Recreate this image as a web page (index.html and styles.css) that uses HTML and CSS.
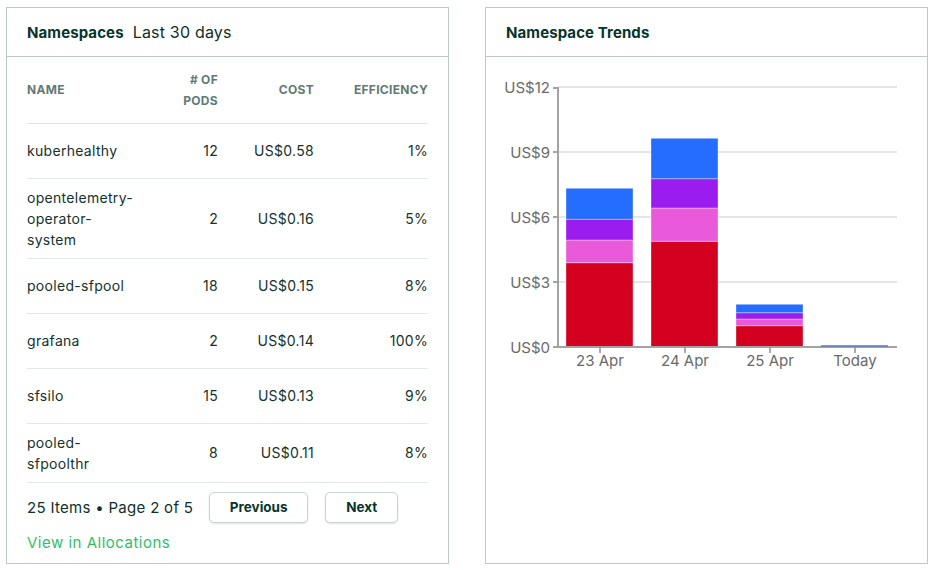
FILE: index.html
```html
<!DOCTYPE html>
<html>
<head>
<meta charset="utf-8">
<link rel="stylesheet" href="styles.css">
</head>
<body>
<div class="page">
  <section class="card">
    <header class="card-head">
      <span class="title">Namespaces</span>
      <span class="subtitle">Last 30 days</span>
    </header>
    <table class="ns-table">
      <colgroup>
        <col class="c-name"><col class="c-pods"><col class="c-cost"><col class="c-eff">
      </colgroup>
      <thead>
        <tr><th class="l">NAME</th><th># OF PODS</th><th>COST</th><th>EFFICIENCY</th></tr>
      </thead>
      <tbody>
        <tr><td class="l">kuberhealthy</td><td>12</td><td>US$0.58</td><td>1%</td></tr>
        <tr><td class="l">opentelemetry-operator-system</td><td>2</td><td>US$0.16</td><td>5%</td></tr>
        <tr><td class="l">pooled-sfpool</td><td>18</td><td>US$0.15</td><td>8%</td></tr>
        <tr><td class="l">grafana</td><td>2</td><td>US$0.14</td><td>100%</td></tr>
        <tr><td class="l">sfsilo</td><td>15</td><td>US$0.13</td><td>9%</td></tr>
        <tr><td class="l">pooled-sfpoolthr</td><td>8</td><td>US$0.11</td><td>8%</td></tr>
      </tbody>
    </table>
    <footer class="card-foot">
      <div class="pager">
        <span class="count">25 Items • Page 2 of 5</span>
        <button class="btn btn-prev">Previous</button>
        <button class="btn btn-next">Next</button>
      </div>
      <a class="link" href="#">View in Allocations</a>
    </footer>
  </section>

  <section class="card">
    <header class="card-head">
      <span class="title">Namespace Trends</span>
    </header>
    <div class="chart">
      <svg width="441" height="330" viewBox="486 57 441 330" xmlns="http://www.w3.org/2000/svg">
        <g class="grid">
          <line x1="558" y1="87" x2="897" y2="87"/>
          <line x1="558" y1="152" x2="897" y2="152"/>
          <line x1="558" y1="217" x2="897" y2="217"/>
          <line x1="558" y1="282" x2="897" y2="282"/>
        </g>
        <g class="bars">
          <rect x="566" y="262.7" width="67" height="84.3" fill="#d4001f"/>
          <rect x="566" y="240" width="67" height="22.7" fill="#e85ad9"/>
          <rect x="566" y="219.3" width="67" height="20.7" fill="#9b1cef"/>
          <rect x="566" y="188.3" width="67" height="31" fill="#246dff"/>

          <rect x="651" y="241.3" width="67" height="105.7" fill="#d4001f"/>
          <rect x="651" y="208" width="67" height="33.3" fill="#e85ad9"/>
          <rect x="651" y="178.7" width="67" height="29.3" fill="#9b1cef"/>
          <rect x="651" y="138.3" width="67" height="40.4" fill="#246dff"/>

          <rect x="736" y="325.7" width="67" height="21.3" fill="#d4001f"/>
          <rect x="736" y="319" width="67" height="6.7" fill="#e85ad9"/>
          <rect x="736" y="312.7" width="67" height="6.3" fill="#9b1cef"/>
          <rect x="736" y="304.3" width="67" height="8.4" fill="#246dff"/>
        </g>
        <g class="axis">
          <line x1="558" y1="87" x2="558" y2="348"/>
          <line x1="557" y1="347" x2="897" y2="347"/>
          <line x1="553" y1="88" x2="558" y2="88"/>
          <line x1="553" y1="152" x2="558" y2="152"/>
          <line x1="553" y1="217" x2="558" y2="217"/>
          <line x1="553" y1="282" x2="558" y2="282"/>
          <line x1="553" y1="347" x2="558" y2="347"/>
        </g>
        <line class="today" x1="821" y1="346" x2="888" y2="346"/>
        <g class="ticks">
          <line x1="600" y1="347" x2="600" y2="353"/>
          <line x1="685" y1="347" x2="685" y2="353"/>
          <line x1="770" y1="347" x2="770" y2="353"/>
          <line x1="855" y1="347" x2="855" y2="353"/>
        </g>
        <g class="ylabels">
          <text x="550" y="93">US$12</text>
          <text x="550" y="158">US$9</text>
          <text x="550" y="223">US$6</text>
          <text x="550" y="288">US$3</text>
          <text x="550" y="353">US$0</text>
        </g>
        <g class="xlabels">
          <text x="600" y="366">23 Apr</text>
          <text x="685" y="366">24 Apr</text>
          <text x="770" y="366">25 Apr</text>
          <text x="855" y="366">Today</text>
        </g>
      </svg>
    </div>
  </section>
</div>
</body>
</html>
```
FILE: styles.css
```css
* { box-sizing: border-box; }
html, body { margin: 0; padding: 0; background: #fff; }
body {
  font-family: Inter, "Noto Sans", "DejaVu Sans", sans-serif;
  color: #0f2e28;
}
.page {
  display: grid;
  grid-template-columns: 443px 443px;
  column-gap: 36px;
  padding: 7px 0 0 6px;
}
.card {
  border: 1px solid #b9cbc7;
  height: 557px;
  display: flex;
  flex-direction: column;
}
.card-head {
  height: 49px;
  border-bottom: 1px solid #b9cbc7;
  display: flex;
  align-items: center;
  gap: 9px;
  padding: 0 20px;
  flex: none;
}
.title {
  font-weight: 700;
  font-size: 15px;
  color: #06352b;
  letter-spacing: 0.1px;
}
.subtitle {
  font-size: 16px;
  letter-spacing: 0.2px;
  color: #0f2e28;
}
.ns-table {
  border-collapse: collapse;
  table-layout: fixed;
  width: 401px;
  margin: 0 20px;
  font-size: 14px;
  letter-spacing: 0.3px;
}
.c-name { width: 131px; }
.c-pods { width: 60px; }
.c-cost { width: 96px; }
.c-eff { width: 114px; }
.ns-table th {
  font-size: 12px;
  font-weight: 700;
  color: #627a75;
  text-align: right;
  line-height: 21px;
  height: 66px;
  padding: 0;
  letter-spacing: 0.3px;
}
.ns-table th.l, .ns-table td.l { text-align: left; }
.ns-table thead tr { border-bottom: 1px solid #dfe6e4; }
.ns-table tbody tr { border-bottom: 1px solid #e2e8e6; }
.ns-table td {
  height: 55px;
  padding: 8px 0 8px 0;
  line-height: 21px;
  text-align: right;
  color: #14322c;
}
.ns-table td.l { padding-right: 21px; }
.ns-table tbody tr:last-child td { height: 59px; }
.card-foot {
  padding: 9px 20px 0 20px;
}
.pager {
  display: flex;
  align-items: center;
  height: 31px;
}
.count {
  font-size: 15px;
  letter-spacing: 0.3px;
  color: #10302a;
  margin-right: 16px;
}
.btn {
  font-family: inherit;
  font-weight: 700;
  font-size: 13.5px;
  color: #06352b;
  background: #fff;
  border: 1px solid #c9d4d2;
  border-radius: 5px;
  height: 31px;
  box-shadow: 0 1px 2px rgba(0,0,0,0.12);
  padding: 0;
}
.btn-prev { width: 99px; }
.btn-next { width: 73px; margin-left: 17px; }
.link {
  display: block;
  margin-top: 10px;
  font-size: 15px;
  letter-spacing: 0.5px;
  color: #2fbe68;
  text-decoration: none;
  line-height: 20px;
}
.chart { flex: none; }
.chart svg { display: block; }
.grid line { stroke: #e5e5e5; stroke-width: 2; }
.bars rect { stroke: rgba(255,255,255,0.35); stroke-width: 1; }
.today { stroke: #5a78b8; stroke-width: 1.5; }
.axis line { stroke: #a3a3a3; stroke-width: 2; }
.ticks line { stroke: #8f8f8f; stroke-width: 1.5; }
.ylabels text {
  font-family: Inter, "Noto Sans", sans-serif;
  font-size: 15px;
  fill: #6a6a6a;
  text-anchor: end;
}
.xlabels text {
  font-family: Inter, "Noto Sans", sans-serif;
  font-size: 15px;
  fill: #6a6a6a;
  text-anchor: middle;
}
```
